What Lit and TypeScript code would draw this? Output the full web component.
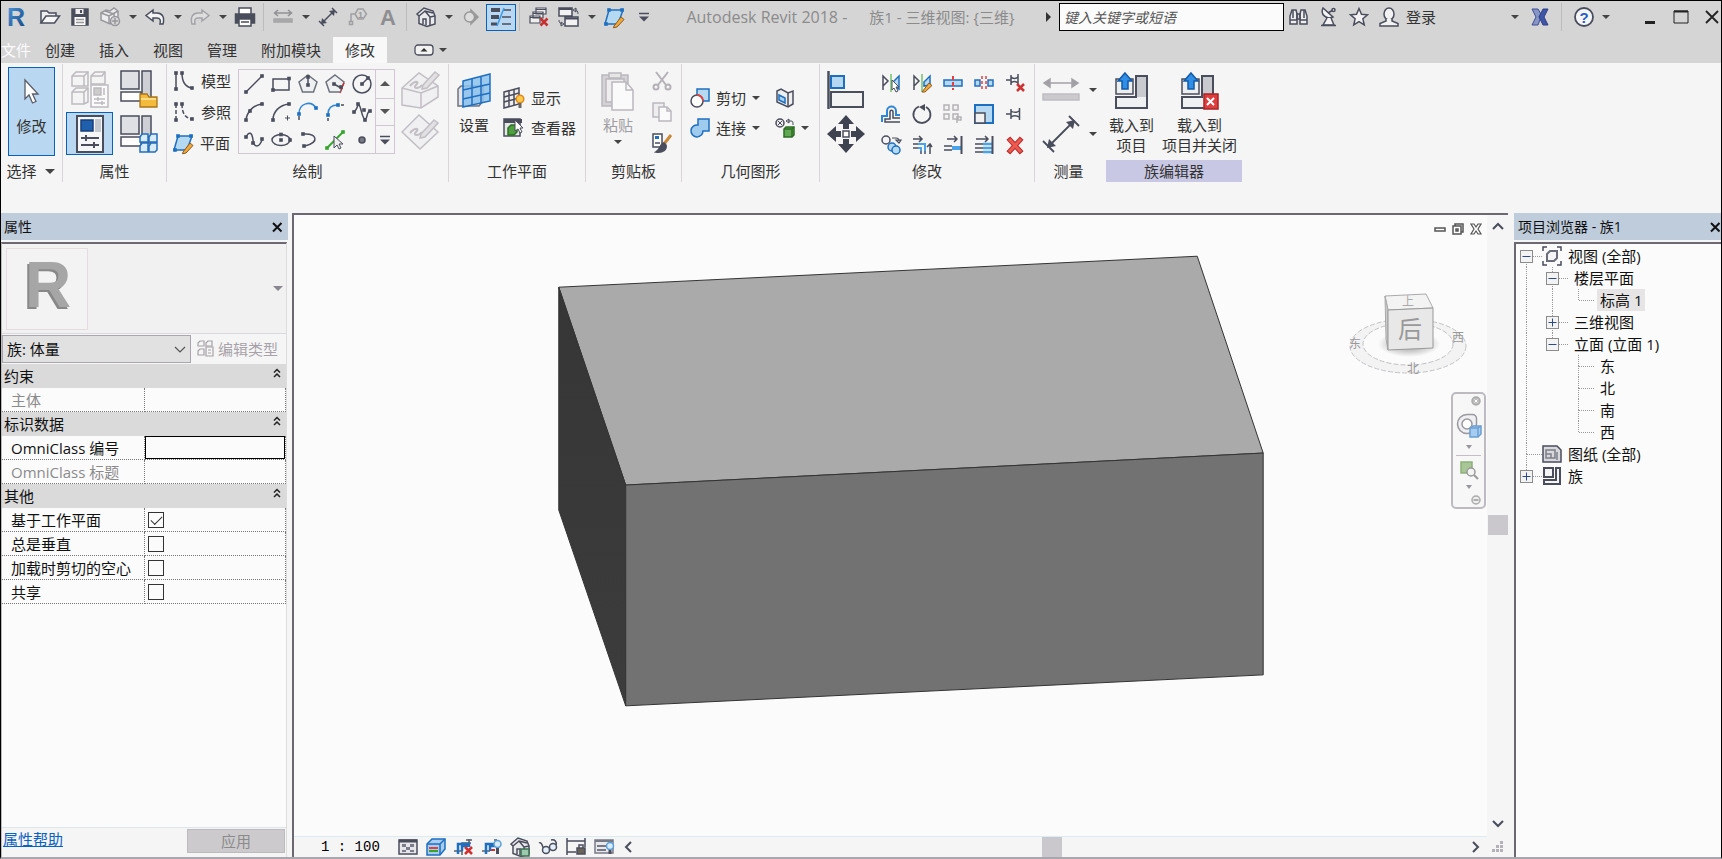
import { LitElement, html, svg, css, nothing, TemplateResult } from "lit";
import { customElement, property } from "lit/decorators.js";

type Art = { w: number; h: number; art: unknown };

const INK = "#4a4d5c";
const BLUE = "#1f6fc0";
const PALE = "#b5d9f3";

/** Small square grips drawn on sketch curves. */
const grips = (points: number[][], fill = INK) =>
  points.map(([x, y]) => svg`<rect x=${x - 1.8} y=${y - 1.8} width="3.6" height="3.6" fill=${fill} stroke="none"/>`);

const sheetPencil = svg`
  <path d="M5 3 19 3 14 17 1 17z" fill=${PALE} stroke=${BLUE}/>
  ${grips([[5, 3], [18, 3], [2, 17]], BLUE)}
  <path d="M10 19 17 10l3 2.5-7 7.5-3.500 .8z" fill="#f3a83c" stroke="#8a5a1c" stroke-width="1"/>`;

const familyBase = svg`
  <path d="M1 1h18v18H1z" fill="#dfe0e4"/><path d="M22 1h9v27H22z" fill="#cfd0d6"/>
  <path d="M1 22h20v9H1z" fill="#fdfdfd"/>`;

const house = svg`
  <path d="M1 7 8 1l9 3 2 5v8l-8 2.500-8-3V9z" fill="#e9eaec"/>
  <path d="M3 9l6-5 5 6v9M9 4l8 2M14 10l5-1M7 17v-5h3v6"/>`;

const icons: Record<string, Art> = {
  open: { w: 20, h: 16, art: svg`<path d="M1 14V2h6l2 2h7v3" fill="#eee"/><path d="M1 14 6 7h13.500l-5 7z" fill="#f6f6f6"/>` },
  save: { w: 18, h: 18, art: svg`<path d="M1 1h16v16H1z" fill="#4a4d5c"/><path d="M4.500 1h8v5h-8z" fill="#eee" stroke="none"/><path d="M3.500 9h11v8h-11z" fill="#fafafa" stroke="none"/><path d="M9 2h2v3H9z" fill="#4a4d5c" stroke="none"/><path d="M5 11.500h8M5 14.500h8" stroke="#999"/>` },
  sync: { w: 20, h: 20, art: svg`<g stroke="#98989c"><path d="M1 6l5-3 4 1 4-3 4 3v7l-8 6-9-4z" fill="#ececee"/><path d="M1 6l8 3 9-5M9 9v8M5 4l9 3v7"/><circle cx="15" cy="14" r="4.500" fill="#d8d8da"/><path d="M12 14h6M15 11v6"/></g>` },
  undo: { w: 20, h: 16, art: svg`<path d="M8 1 1 6.500 8 12V9h4c3 0 4 2 3 6h3c2-7-1-11-6-11H8z" fill="#f4f4f4"/>` },
  redo: { w: 20, h: 16, art: svg`<path d="M12 1l7 5.500L12 12V9H8c-3 0-4 2-3 6H2C0 8 3 4 8 4h4z" fill="#dedede" stroke="#a4a4a8"/>` },
  print: { w: 22, h: 20, art: svg`<path d="M5 7V1h12v6" fill="#fff"/><path d="M1.500 7h19v9h-19z" fill="#4a4d5c"/><path d="M5 12h12v7H5z" fill="#fff"/><path d="M7 15h8"/>` },
  measure: { w: 20, h: 16, art: svg`<path d="M1 4h18M5 1 1.500 4 5 7M15 1l3.500 3L15 7" stroke="#919195"/><path d="M1 10h18v3H1z" fill="#aaa" stroke="#a5a5a9"/>` },
  dimension: { w: 20, h: 20, art: svg`<path d="M3 17 17 3M1 14l5 5M14 1l5 5"/><path d="M3 17l1-6 5 5zM17 3l-1 6-5-5z" fill=${INK} stroke="none"/>` },
  tag: { w: 20, h: 18, art: svg`<g stroke="#a0a0a4"><path d="M10 1h5l3.500 5L15 11h-5L7 6zM7 6H3v8"/><path d="M1.500 13.500h3v3h-3z"/></g><text x="10" y="9.500" class="t9" fill="#999">1</text>` },
  text: { w: 20, h: 24, art: svg`<text x="2" y="20" class="t22" fill="#8e8e92">A</text>` },
  house: { w: 20, h: 20, art: house },
  section: { w: 18, h: 16, art: svg`<path d="M9 1l7 7-7 7z" fill="#999" stroke="#999"/><circle cx="7.500" cy="8" r="5" fill="#ddd" stroke="#999"/>` },
  thin: { w: 22, h: 20, art: svg`<path d="M1 3h9M1 10h8" stroke-width="4"/><path d="M1 17h6" stroke-width="3"/><path d="M13 3h8M12 10h9M12 17h9" stroke-width="1.500"/><path d="M14 1 7 19" stroke="#3b9be8"/>` },
  closeHidden: { w: 20, h: 20, art: svg`<path d="M7 1h10v6H7zM4 5h10v6H4zM1 9h10v7H1z" fill="#eee" stroke-width="1.200"/><path d="M7 2.500h10M4 6.500h10M1 10.500h10" stroke-width="1"/><path d="M11.500 11.500l7 7M18.500 11.500l-7 7" stroke="#c63030" stroke-width="2.500"/>` },
  switchWin: { w: 22, h: 20, art: svg`<path d="M1 1h13v8H1zM7 10h13v9H7z" fill="#f2f2f2"/><path d="M1 2h13M7 11.500h13" stroke-width="2"/><path d="M17 3c2 0 3 1 3 4M15 3l3-2v4zM4 17c-2 0-3-2-3-4M6 17l-3-2v4z" stroke-width="1"/>` },
  plane: { w: 21, h: 20, art: sheetPencil },
  customize: { w: 12, h: 10, art: svg`<path d="M1 1.500h10"/><path d="M1 4.500h10L6 9.500z" fill=${INK} stroke="none"/>` },
  binoculars: { w: 22, h: 20, art: svg`<path d="M4 3h4l1 4v10H2V9zM17 3h-4l-1 4v10h7V9z" fill="#eee"/><path d="M9 7h3v5H9zM2 13h7M12 13h7M5 3v8M16 3v8"/>` },
  dish: { w: 18, h: 20, art: svg`<path d="M3 1c-3 6 3 12 10 9z" fill="#f4f4f4"/><path d="M8 6l5-3"/><circle cx="13.500" cy="3" r="1.500" fill="#fff"/><path d="M7 11 3 18h11l-3-7" fill="#f4f4f4"/><path d="M1 18.500h15"/>` },
  star: { w: 20, h: 20, art: svg`<path d="M10 1.500l2.500 5.700 6 .6-4.600 4 1.400 6.200-5.300-3.300L4.700 18l1.400-6.200-4.600-4 6-.6z" fill="#f2f2f2"/>` },
  user: { w: 20, h: 20, art: svg`<ellipse cx="10" cy="7" rx="5" ry="6" fill="#f2f2f2"/><path d="M7 12v2l-6 2.500V19h18v-2.500L13 14v-2" fill="#f2f2f2"/>` },
  exchange: { w: 18, h: 18, art: svg`<path d="M1 1h6l3 5-2 3 2 0-3 8H1l4-8z" fill="#8795c4" stroke="#3e4f96" stroke-width="1"/><path d="M17 1h-5L8 9l4 8h5l-4-8z" fill="#3e56a8" stroke="#2f3f86" stroke-width="1"/>` },
  help: { w: 20, h: 20, art: svg`<circle cx="10" cy="10" r="9" fill="#f5f6fa" stroke-width="1.800"/><text x="5.500" y="15.500" class="t15" fill="#2b5cc0">?</text>` },
  min: { w: 18, h: 16, art: svg`<path d="M4 13.500h10" stroke="#222" stroke-width="3"/>` },
  max: { w: 18, h: 16, art: svg`<path d="M2 2h14v12H2z" stroke="#222" stroke-width="1"/><path d="M2 2.500h14" stroke="#222" stroke-width="2"/>` },
  close: { w: 18, h: 16, art: svg`<path d="M3 2l12 12M15 2 3 14" stroke="#222" stroke-width="1.800"/>` },
  closePane: { w: 12, h: 12, art: svg`<path d="M2 2l8.500 8.500M10.500 2 2 10.500" stroke="#111" stroke-width="2"/>` },
  minRibbon: { w: 20, h: 12, art: svg`<rect x="1" y="1" width="18" height="10" rx="3" fill="#f2f2f2" stroke-width="1.300"/><path d="M6.500 7.500h7L10 4z" fill="#333" stroke="none"/>` },

  cursor: { w: 18, h: 26, art: svg`<path d="M2 1v19l4-4 3.500 8 3.500-1.500L9.500 15H15z" fill="#fff" stroke="#5a5d68" stroke-width="1.300"/>` },
  typeProps: { w: 38, h: 38, art: svg`<g stroke="#bdbabf"><path d="M1 6l4-4h12v14H1zM20 6l4-4h10v12H20zM1 22l4-4h12v14l-4 2H1z" fill="#f4f4f5"/><path d="M1 6h12v10M13 6l4-4M20 6h11l3-4M1 22h12v12M13 22l4-4"/><path d="M20 15h17v22H20z" fill="#fbfbfb"/><path d="M23 18h7v7h-7z" fill="#ccc"/><path d="M33 18v7M23 29h11M23 33h11M27 27v4M31 31v4"/></g>` },
  famCategory: { w: 38, h: 38, art: svg`${familyBase}<path d="M20 27v10h17V27H29l-2-3h-7z" fill="#f3ba3c" stroke="#a9761a" stroke-width="1.300"/><path d="M21 29h15" stroke="#ffe7a3"/>` },
  properties: { w: 28, h: 38, art: svg`<path d="M1 1h26v36H1z" fill="#f4f6f8" stroke-width="2"/><path d="M5 5h12v11H5z" fill="#1f5fae" stroke="#173f77"/><path d="M19 4h6v13h-6z" fill="#c7c9d0" stroke="none"/><path d="M5 23h18M5 30h18M10 20v6M18 27v6" stroke-width="2"/>` },
  famTypes: { w: 38, h: 38, art: svg`${familyBase}<g stroke="#256fbb" fill="#d9ebf8"><path d="M20 22l2-3h6v8h-8zM29 22l2-3h6v8h-8zM20 31l2-3h6v9h-8zM29 31l2-3h6v7l-2 2h-6z"/></g>` },
  model: { w: 22, h: 20, art: svg`<path d="M3 2v16M9 2c0 9 3 14 10 15"/>${grips([[3, 2], [3, 18], [9, 2], [19, 17]])}` },
  reference: { w: 22, h: 20, art: svg`<g stroke-dasharray="4 2"><path d="M3 2v16M9 2c0 9 3 14 10 15"/></g>${grips([[3, 2], [3, 18], [9, 2], [19, 17]])}` },
  line: { w: 20, h: 20, art: svg`<path d="M2 18 18 2"/>${grips([[2, 18], [18, 2]])}` },
  rect: { w: 20, h: 20, art: svg`<path d="M2 5h16v11H2z"/>${grips([[18, 4.5], [2, 16]])}` },
  polyIn: { w: 20, h: 20, art: svg`<path d="M10 1l9 7-3.500 10h-11L1 8z" fill="#eef0f1" stroke="#6d717c"/><path d="M10 3v8"/>${grips([[10, 3], [10, 11]])}` },
  polyOut: { w: 20, h: 20, art: svg`<path d="M10 1l9 7-3.500 10h-11L1 8z" fill="#eef0f1" stroke="#6d717c"/><path d="M9 10l7 4"/><path d="M19 9l-4 10" stroke="#e22828" stroke-dasharray="3 2"/>${grips([[9, 10], [16, 13]])}` },
  circle: { w: 20, h: 20, art: svg`<circle cx="10" cy="10" r="9"/><path d="M10 10l6-6"/>${grips([[10, 10], [16, 4]])}` },
  arc3: { w: 20, h: 20, art: svg`<path d="M2 18C3 10 9 3 18 2"/>${grips([[2, 18], [6, 9], [18, 2]])}` },
  arcCenter: { w: 20, h: 20, art: svg`<path d="M2 18C2 10 8 3 18 2"/><path d="M14 16h5M16.500 13.500v5" stroke-width="1"/>${grips([[2, 18], [18, 2]])}` },
  arcTangent: { w: 20, h: 20, art: svg`<path d="M1 12C1 1 13-2 18 6" stroke="#2f86d6"/>${grips([[1, 12], [18, 6]], BLUE)}<path d="M1 14v4"/>` },
  fillet: { w: 20, h: 20, art: svg`<path d="M3 12C3 6 6 3 13 3" stroke="#2f86d6"/>${grips([[3, 13], [13, 3]], BLUE)}<path d="M3 16v3M16 3h3"/>` },
  spline: { w: 20, h: 20, art: svg`<path d="M2 10c4-3 3-8 5-7s3 14 6 14 1-7 5-8"/>${grips([[2, 10], [6, 2], [12, 8], [18, 9], [13, 18]])}` },
  splineCurve: { w: 20, h: 20, art: svg`<path d="M2 7c3-6 6-5 7 3s6 8 9 0"/>${grips([[2, 7], [9, 13], [18, 9]])}` },
  ellipse: { w: 20, h: 20, art: svg`<ellipse cx="10" cy="10" rx="9" ry="5.500"/>${grips([[10, 10], [10, 4.5], [19, 10]])}` },
  partial: { w: 20, h: 20, art: svg`<path d="M5 4c14-1 17 8 2 12"/>${grips([[5, 4], [6, 16]])}` },
  pick: { w: 20, h: 20, art: svg`<path d="M2 18 18 2" stroke="#36a52c" stroke-width="2"/>${grips([[2, 18], [18, 2]], "#36a52c")}<path d="M9 6v12l3-3 2 4 2-1-2-4h4z" fill="#eee" stroke-width="1"/>` },
  point: { w: 20, h: 20, art: svg`<circle cx="10" cy="10" r="3" fill="#777985"/>` },
  drawFace: { w: 38, h: 38, art: svg`<g stroke="#c2bfc4"><path d="M1 17 18 2l19 13v11L20 37 1 34z" fill="#f0eff1"/><path d="M1 17l19 5 17-7M20 22v15"/><path d="M9 15c5-6 10-5 6-1s3 4 6 0" stroke-width="2"/><path d="M22 14 34 1l4 3-12 13-5 1z" fill="#e2e0e3"/></g>` },
  drawPlane: { w: 38, h: 38, art: svg`<g stroke="#c2bfc4"><path d="M1 19 18 2l19 17-18 17z" fill="#f0eff1"/><path d="M9 20c5-6 10-5 6-1s3 4 6 0" stroke-width="2"/><path d="M20 21 33 7l4 3-13 14-5 1z" fill="#e2e0e3"/></g>` },
  setPlane: { w: 34, h: 36, art: svg`<path d="M1 16l3-3h22v15l-4 5H1z" fill="#e3e4e8" stroke="#70737e"/><path d="M6 8 33 1v27L6 34z" fill="#8cc1ec" fill-opacity=".85" stroke="#1f6fc0"/><path d="M15 6v26M24 3v27M6 17l27-6M6 26l27-6" stroke="#1f6fc0"/>` },
  showPlane: { w: 22, h: 22, art: svg`<path d="M1 5l15-4v16L1 21z" fill="#eee"/><path d="M6 4v16M11 2v16M1 10l15-4M1 15l15-4"/><circle cx="17" cy="12" r="3.800" fill="#ffc94a" stroke="#e08a1e"/><path d="M17 16v5" stroke-width="3" stroke="#666"/>` },
  viewer: { w: 22, h: 22, art: svg`<path d="M1 2h16v17H1z" fill="#e6e8e6"/><path d="M1 4h18" stroke-width="4"/><path d="M5 11l3-3h6v7l-3 3H5z" fill="#4d9f40" stroke="#2d6e24"/><path d="M12 3v11l3-2 2 4 2-1-2-4h3z" fill="#fff" stroke-width="1"/>` },
  paste: { w: 34, h: 40, art: svg`<g stroke="#bbb8bd"><path d="M1 4h26v31H1z" fill="#d4d2d5"/><path d="M5 8h18v23H5z" fill="#eee"/><path d="M8 2h12v5H8z" fill="#e6e6e6"/><path d="M11 11h14l7 8v20H11z" fill="#fafafa"/><path d="M25 11v8h7"/></g>` },
  cut: { w: 20, h: 20, art: svg`<g stroke="#b5b2b7" stroke-width="2"><path d="M4 1l10 13M16 1 6 14"/><circle cx="4" cy="16" r="2.500"/><circle cx="16" cy="16" r="2.500"/></g>` },
  copy: { w: 20, h: 20, art: svg`<g stroke="#bbb8bd"><path d="M1 1h11v14H1z" fill="#eee"/><path d="M7 5h8l4 4v10H7z" fill="#fafafa"/><path d="M15 5v4h4"/></g>` },
  match: { w: 20, h: 20, art: svg`<path d="M1 1h9v13H1z" fill="#fff"/><path d="M3 3h4v3H3z" fill=${BLUE} stroke="none"/><path d="M3 10h5"/><path d="M19 2l-7 9" stroke="#c98a3a" stroke-width="3"/><path d="M12 10c-4 0-3 6-8 9 7 1 11-2 10-7z" fill="#4a4d5c"/>` },
  cutGeo: { w: 20, h: 20, art: svg`<path d="M7 1h12v12H7z" fill=${PALE} stroke=${BLUE}/><circle cx="7" cy="13" r="6" fill="#fff"/><path d="M7 7a6 6 0 0 1 6 6" stroke="#e04040" stroke-width="1.800"/>` },
  joinGeo: { w: 20, h: 20, art: svg`<path d="M8 1h11v12h-6a6 6 0 1 1-5-6z" fill="#9fcbee" stroke=${BLUE}/>` },
  splitFace: { w: 20, h: 20, art: svg`<path d="M2 3l4-2 7 4 5-2v13l-5 3-11-5z" fill="#eceef0"/><path d="M13 5v14"/><path d="M4 7l6 3v5l-6-3z" fill="#a8d2f1" stroke=${BLUE}/>` },
  paint: { w: 20, h: 20, art: svg`<circle cx="5" cy="5" r="4" fill="#eee"/><path d="M3 3l4 4M7 3 3 7" stroke-width="1"/><path d="M13 3h3c2 0 2 1 2 4M14 1l-3 2 3 2z" stroke-width="1"/><path d="M9 11l2-2h8v8l-2 2H9z" fill="#62a852" stroke="#2d6e24"/><path d="M9 11h8v8M17 11l2-2" stroke="#2d6e24"/>` },
  align: { w: 38, h: 38, art: svg`<path d="M1.500 0v38" stroke-width="2.500"/><path d="M4 5h13v12H4z" fill=${PALE} stroke=${BLUE} stroke-width="2"/><path d="M4 21h32v15H4z" fill="#f2f2f3" stroke-width="2"/>` },
  move: { w: 38, h: 38, art: svg`<g fill="#3f4250" stroke="none"><path d="M19 0l8 9h-5v5h-6V9h-5zM19 38l-8-9h5v-5h6v5h5zM0 19l9-8v5h5v6H9v5zM38 19l-9 8v-5h-5v-6h5v-5z"/></g><path d="M16 16h6v6h-6z" fill="#fff"/>` },
  mirrorPick: { w: 20, h: 20, art: svg`<path d="M2 17V3l5 5-5 5"/><path d="M10 1v18" stroke="#36a52c" stroke-width="1"/><path d="M18 16V3l-6 6v3z" fill=${PALE} stroke=${BLUE}/><path d="M11 7v10l2-2 2 4 2-1-2-4h3z" fill="#fff" stroke-width="1"/>` },
  mirrorDraw: { w: 20, h: 20, art: svg`<path d="M2 17V3l5 5-5 5"/><path d="M10 1v18" stroke="#36a52c" stroke-width="1"/><path d="M18 12V3l-6 6v4z" fill=${PALE} stroke=${BLUE}/><path d="M10 19l7-9 3 2.500-7 6.500z" fill="#f3a83c" stroke="#8a5a1c" stroke-width="1"/>` },
  split: { w: 20, h: 20, art: svg`<path d="M1 7h18v6H1z" fill=${PALE} stroke=${BLUE}/><path d="M10 3v14" stroke="#e04040" stroke-width="2" stroke-dasharray="4 2"/>` },
  splitGap: { w: 20, h: 20, art: svg`<path d="M1 7h5v6H1zM14 7h5v6h-5z" fill=${PALE} stroke=${BLUE}/><path d="M8 3v14M12 3v14" stroke="#e04040" stroke-width="1.500" stroke-dasharray="3 2"/>` },
  unpin: { w: 20, h: 20, art: svg`<path d="M1 7h5M6 2v10M6 4c2 2 4 2 7 0M6 10c2-2 4-2 7 0M13 1v12"/><path d="M12 11l7 7M19 11l-7 7" stroke="#cc3333" stroke-width="2.500"/>` },
  offset: { w: 20, h: 20, art: svg`<path d="M1 18v-6h5V7c0-6 9-6 9 0v4h4" stroke="#2f86d6" stroke-width="2"/><path d="M19 14h-7V8c0-2.500-3-2.500-3 0v7H4v3h15"/>` },
  rotate: { w: 20, h: 20, art: svg`<path d="M7 2.500A8.500 8.500 0 1 0 14 3" stroke-width="1.800"/><path d="M13 0v7L7 3z" fill=${INK} stroke="none"/>` },
  array: { w: 20, h: 20, art: svg`<g stroke="#b5b2b7" fill="#f3f3f3"><path d="M1 1h5v5H1zM10 1h5v5h-5zM1 10h5v5H1zM10 10h5v5h-5z"/></g><path d="M14 12v7M14 13h4v3h-4" stroke="#b5b2b7"/>` },
  scale: { w: 20, h: 20, art: svg`<path d="M1 1h18v18H1z" fill=${PALE} stroke=${BLUE} stroke-width="2"/><path d="M1 9h10v10H1z" fill="#f1f1f2"/>` },
  pin: { w: 20, h: 20, art: svg`<path d="M1 10h5M6 5v10M6 7c3 2 5 2 8 0M6 13c3-2 5-2 8 0M14.500 4v12"/>` },
  copyTool: { w: 20, h: 20, art: svg`<circle cx="5" cy="5" r="4"/><path d="M11 3h4c2 0 3 1 3 3M18 8l-3-3h5z" stroke-width="1.200"/><circle cx="11" cy="12" r="4" fill=${PALE} stroke=${BLUE}/><circle cx="15" cy="15" r="4" fill=${PALE} stroke=${BLUE}/>` },
  trimCorner: { w: 20, h: 20, art: svg`<path d="M1 4h9M7 1l3 3-3 3M18 19V9M15 12l3-3 2 3M1 9h5M1 13h5M9 19v-3M13 19v-3"/><path d="M6 9h7v7M6 13h3v3" stroke="#4aa3e8" stroke-width="2"/>` },
  trimOne: { w: 20, h: 20, art: svg`<path d="M4 4h10M11 1l3 3-3 3M1 11h8M1 15h8"/><path d="M9 13h9" stroke="#4aa3e8" stroke-width="4"/><path d="M18.500 1v18" stroke-width="2"/>` },
  trimMany: { w: 20, h: 20, art: svg`<path d="M2 4h12M11 1l3 3-3 3M1 9h8M1 13h8M1 17h8"/><path d="M9 9h9M9 13h9M9 17h9" stroke="#4aa3e8" stroke-width="2.500"/><path d="M18.500 1v18" stroke-width="2"/>` },
  remove: { w: 20, h: 20, art: svg`<path d="M5 5l10 11M15 5 5 16" stroke="#b52a2a" stroke-width="5" stroke-linecap="square"/><path d="M5 5l10 11M15 5 5 16" stroke="#ee5a50" stroke-width="3" stroke-linecap="square"/>` },
  measureBig: { w: 38, h: 26, art: svg`<g stroke="#a3a1a5"><path d="M2 6h34"/><path d="M8 2 2 6l6 4zM30 2l6 4-6 4z" fill="#a3a1a5"/><path d="M1 17h36v6H1z" fill="#cbc9cc" stroke="#c0bdc2"/></g>` },
  dimensionBig: { w: 38, h: 38, art: svg`<path d="M6 32 32 6M1 26l11 11M27 1l10 10" stroke-width="1.800"/><path d="M5 33l2-9 7 7zM33 5l-2 9-7-7z" fill=${INK} stroke="none"/>` },
  load: { w: 34, h: 38, art: svg`<path d="M1 7h17v15H1z" fill="#eceef0"/><path d="M21 4h11v32H1V25h20z" fill="#eff0f1" stroke-width="2"/><path d="M22 5h9v20h-9z" fill="#c9cad0" stroke="none"/><path d="M10 1l7 8h-4v8H7V9H3z" fill="#2f8fe8" stroke="#1459a5"/>` },
  loadClose: { w: 38, h: 38, art: svg`<path d="M1 7h17v15H1z" fill="#eceef0"/><path d="M21 4h11v32H1V25h20z" fill="#eff0f1" stroke-width="2"/><path d="M22 5h9v20h-9z" fill="#c9cad0" stroke="none"/><path d="M10 1l7 8h-4v8H7V9H3z" fill="#2f8fe8" stroke="#1459a5"/><path d="M23 22h14v15H23z" fill="#dd3f3f" stroke="#a92424"/><path d="M26 26l7 7M33 26l-7 7" stroke="#fff" stroke-width="2"/>` },

  editType: { w: 18, h: 18, art: svg`<g stroke="#a7a2a9" stroke-width="1.200"><path d="M1 3l2-2h4v5H1zM9 3l2-2h4v5H9zM1 11l2-2h4v6H1z"/><path d="M9 7h7v9H9zM11 10h3M11 13h3"/></g>` },
  collapse: { w: 8, h: 10, art: svg`<path d="M1 4.500 4 1.500l3 3M1 9l3-3 3 3" stroke="#222"/>` },
  chevDown: { w: 12, h: 8, art: svg`<path d="M1 1l5 5 5-5" stroke="#555" stroke-width="1.200"/>` },
  views: { w: 20, h: 20, art: svg`<path d="M1 5V1h4M15 1h4v4M19 15v4h-4M5 19H1v-4" stroke-width="1.500"/><path d="M5 8l3-3h7v7l-3 3H5z" fill="#f5f5f5" stroke="#6b6e7a" stroke-width="2"/>` },
  sheets: { w: 20, h: 18, art: svg`<path d="M1 1h14l4 4v12H1z" fill="#d9d9dd"/><path d="M4 5h9v8H4zM4 9h5v4M15 7v8" stroke="#7c7f8a"/>` },
  families: { w: 20, h: 20, art: svg`<path d="M2 2h9v9H2z" fill="#f5f5f5" stroke-width="2"/><path d="M14 2h4v16H2v-4h12z" fill="#f5f5f5" stroke-width="2"/>` },

  winMin: { w: 12, h: 12, art: svg`<path d="M1 5h10v3H1z" fill="#fff" stroke="#555"/>` },
  winRestore: { w: 12, h: 12, art: svg`<path d="M3 3V1h8v8H9" stroke="#555"/><path d="M1 3h8v8H1z" fill="#fff" stroke="#555"/><path d="M4 6h2v2H4z" stroke="#555"/>` },
  winClose: { w: 12, h: 12, art: svg`<path d="M1 1h3l2 3 2-3h3L8 6l3 5H8L6 8l-2 3H1l3-5z" fill="#fff" stroke="#555" stroke-width="1.200"/>` },
  up: { w: 12, h: 8, art: svg`<path d="M1 7l5-5 5 5" stroke-width="2"/>` },
  down: { w: 12, h: 8, art: svg`<path d="M1 1l5 5 5-5" stroke-width="2"/>` },
  left: { w: 8, h: 12, art: svg`<path d="M7 1 2 6l5 5" stroke-width="2"/>` },
  right: { w: 8, h: 12, art: svg`<path d="M1 1l5 5-5 5" stroke-width="2"/>` },
  detail: { w: 20, h: 18, art: svg`<path d="M1 2h18v14H1z" fill="#e6e6ea"/><path d="M1 3h18" stroke-width="3"/><path d="M4 6h4v3H4zM12 6h4v3h-4zM8 9h4v3H8zM4 12h4v2H4zM12 12h4v2h-4z" fill="#7a7d89" stroke="none"/>` },
  style: { w: 20, h: 18, art: svg`<path d="M1 6l5-5h13v10l-5 6H1z" fill="#a8cdf0" stroke=${BLUE}/><path d="M1 6h13v11M14 6l5-5" stroke=${BLUE}/><path d="M3 10h9" stroke="#e04040" stroke-width="2"/><path d="M3 13h9" stroke="#36a52c" stroke-width="2"/>` },
  cropOff: { w: 20, h: 18, art: svg`<path d="M0 13h8M8 17V5h9M12 2h6M15 1v6" stroke="#5a5d68"/><path d="M4 16V6h11v3M8 13V8h6" stroke=${BLUE} stroke-width="2.500"/><path d="M11 9l7 7M18 9l-7 7" stroke="#d03030" stroke-width="2.500"/>` },
  cropShow: { w: 20, h: 18, art: svg`<path d="M0 13h8M12 2h3" stroke="#5a5d68"/><path d="M4 16V6h9M8 13V8h5" stroke=${BLUE} stroke-width="2.500"/><path d="M9 12h4" stroke="#d03030" stroke-width="2"/><circle cx="15.500" cy="6" r="3.500" fill="#d8ebfb" stroke="#5a9fd8"/><path d="M15.500 10v6" stroke-width="3"/>` },
  lock3d: { w: 20, h: 20, art: svg`${house}<path d="M11 12h8v7h-8z" fill="#9bc9ae" stroke="#3c6e52"/>` },
  glasses: { w: 20, h: 18, art: svg`<path d="M1 5c3-2 4 6 5 6M13 2c4-1 6 2 5 5"/><circle cx="8" cy="12" r="3.500" fill="#e3f0fb"/><circle cx="15" cy="9" r="3.500" fill="#e3f0fb"/>` },
  constraints: { w: 20, h: 18, art: svg`<path d="M1 0v17M19 0v9M1 3h18M1 14h9"/><path d="M11 10h8v6h-8z" fill="#6a6358"/><path d="M13 10V7h4v3"/>` },
  analysis: { w: 20, h: 18, art: svg`<path d="M1 2h18v13H1z" fill="#e8e8ec" stroke="#777a86"/><path d="M1 3h18M3 8h9M3 12h9" stroke="#777a86" stroke-width="2"/><circle cx="16" cy="8" r="3.500" fill="#d8ebfb" stroke="#5a9fd8"/><path d="M16 12v4" stroke-width="3"/>` },
  grip: { w: 12, h: 12, art: svg`<g fill="#b5b1b8" stroke="none"><path d="M8 0h3v3H8zM4 4h3v3H4zM8 4h3v3H8zM0 8h3v3H0zM4 8h3v3H4zM8 8h3v3H8z"/></g>` },
  navClose: { w: 10, h: 10, art: svg`<circle cx="5" cy="5" r="4" fill="#bbb" stroke="#aaa"/><path d="M3.500 3.500l3 3M6.500 3.500l-3 3" stroke="#fff" stroke-width="1"/>` },
  navMenu: { w: 10, h: 10, art: svg`<circle cx="5" cy="5" r="4" fill="#eee" stroke="#aaa"/><path d="M2.500 5h5" stroke="#999"/>` },
  wheel: { w: 26, h: 26, art: svg`<g stroke="#9b989f"><path d="M11 1.500h5a4 4 0 0 1 4.500 4V11a9.500 9.500 0 1 1-9.500-9.500z" fill="#f0f0f2"/><circle cx="11" cy="11" r="5" fill="#fff"/></g><path d="M14 15l3-2h8v8l-3 3h-8z" fill="#a5cdf2" stroke="#6b9fd2"/><path d="M14 15h8v9M22 15l3-2" stroke="#6b9fd2"/>` },
  zoomRegion: { w: 18, h: 18, art: svg`<path d="M1 1h11v11H1z" fill="#a9c796" stroke="#8db07a"/><circle cx="11" cy="11" r="4" fill="#f4f4f4" stroke="#999"/><path d="M14 14l4 4" stroke="#999" stroke-width="2"/>` },
};

const iconStyles = css`
  svg { display: block; flex: none; overflow: visible; fill: none; stroke: #4a4d5c; stroke-width: 1.5; }
  svg text { stroke: none; font-family: "Liberation Sans", sans-serif; font-weight: 700; }
  .t9 { font-size: 9px; }
  .t15 { font-size: 15px; }
  .t22 { font-size: 22px; }
`;

const icon = (name: string) => {
  const i = icons[name];
  return html`<svg width=${i.w} height=${i.h} viewBox="0 0 ${i.w} ${i.h}" aria-hidden="true">${i.art}</svg>`;
};

const base = css`
  :host, * { box-sizing: border-box; }
  button { font: inherit; color: inherit; border: 0; background: none; padding: 0; margin: 0; display: flex; align-items: center; justify-content: center; white-space: nowrap; }
  .arrow { flex: none; display: flex; align-items: center; justify-content: center; width: 14px; height: 14px; }
  .arrow::before { content: ""; border: 4px solid transparent; border-top: 4px solid #444; border-bottom: 0; }
  .dim { color: #a09da2; }
`;

const drop = (label: string) => html`<button class="arrow" aria-label=${label}></button>`;

@customElement("title-bar")
class TitleBar extends LitElement {
  static styles = [base, iconStyles, css`
    :host { display: flex; flex: none; height: 36px; padding-bottom: 4px; background: #d5d5d5; align-items: center; }
    .quick, .right, .win { display: flex; align-items: center; flex: none; }
    .tool { width: 30px; height: 27px; }
    .brand { width: 34px; height: 32px; padding-right: 4px; }
    .quick .arrow { width: 15px; }
    .on { background: #b9d7f0; border: 1px solid #0a62b8; }
    .sep { width: 1px; height: 28px; margin: 0 4px 0 3px; background: #bcbcbc; }
    .right .sep { margin: 0 7px 0 6px; }
    .title { flex: 1; display: flex; justify-content: center; gap: 22px; font-size: 15px; line-height: 24px; color: #8b8b8b; white-space: nowrap; overflow: hidden; }
    .title b { font-weight: 400; font-size: 16px; }
    .expand { width: 14px; height: 14px; }
    .expand::before { content: ""; border: 5px solid transparent; border-left: 5px solid #333; border-right: 0; }
    input { width: 225px; height: 28px; margin: 0 0 0 3px; padding: 0 4px; border: 1px solid #000; background: #fbfbfb; font: italic 14px/20px "Open Sans", "Noto Sans CJK SC", sans-serif; color: #555; }
    input::placeholder { color: #555; opacity: 1; }
    .login { font-size: 15px; line-height: 22px; padding: 0 72px 0 2px; color: #333; }
    .right .after { margin-right: 3px; }
    .win { gap: 13px; padding: 0 0 0 28px; }
    .logo { font-size: 25px; }
  `];
  private items: [string, string][] = [
    ["open", "打开"], ["save", "保存"], ["sync", "同步"], ["v", ""], ["undo", "放弃"], ["v", ""], ["redo", "重做"], ["v", ""],
    ["print", "打印"], ["|", ""], ["measure", "测量"], ["v", ""], ["dimension", "对齐尺寸标注"], ["tag", "按类别标记"], ["text", "文字"],
    ["|", ""], ["house", "默认三维视图"], ["v", ""], ["section", "剖面"], ["thin", "细线"], ["|", ""],
    ["closeHidden", "关闭隐藏窗口"], ["switchWin", "切换窗口"], ["v", ""], ["plane", "工作平面"], ["customize", "自定义"],
  ];
  render() {
    return html`
      <div class="quick">
        <button class="tool brand" aria-label="Revit">
          <svg width="22" height="30" viewBox="0 0 22 30">
            <defs><linearGradient id="g" x1="0" y1="0" x2="1" y2="1"><stop offset="0" stop-color="#4f9be0"/><stop offset="1" stop-color="#15457f"/></linearGradient></defs>
            <text class="logo" x="2" y="24" fill="url(#g)">R</text>
          </svg>
        </button>
        ${this.items.map(([k, l]) => k === "v" ? drop("更多") : k === "|" ? html`<span class="sep"></span>`
          : html`<button class="tool ${k === "thin" ? "on" : ""}" aria-label=${l}>${icon(k)}</button>`)}
      </div>
      <div class="title"><b>Autodesk Revit 2018 -</b><span>族1 - 三维视图: {三维}</span></div>
      <div class="right">
        <button class="expand" aria-label="展开"></button>
        <input type="search" aria-label="搜索" placeholder="键入关键字或短语">
        <button class="tool" aria-label="搜索">${icon("binoculars")}</button>
        <button class="tool" aria-label="通讯中心">${icon("dish")}</button>
        <button class="tool" aria-label="收藏夹">${icon("star")}</button>
        <button class="tool" aria-label="用户">${icon("user")}</button>
        <button class="login">登录</button>
        <button class="arrow after" aria-label="登录选项"></button>
        <button class="tool" aria-label="Exchange">${icon("exchange")}</button>
        <span class="sep"></span>
        <button class="tool" aria-label="帮助">${icon("help")}</button>
        ${drop("帮助选项")}
        <div class="win">
          <button aria-label="最小化">${icon("min")}</button>
          <button aria-label="最大化">${icon("max")}</button>
          <button aria-label="关闭">${icon("close")}</button>
        </div>
      </div>`;
  }
}

@customElement("ribbon-tabs")
class RibbonTabs extends LitElement {
  static styles = [base, iconStyles, css`
    :host { display: flex; flex: none; height: 26px; background: #d5d5d5; align-items: center; font-size: 15px; line-height: 24px; color: #333; }
    .tab { height: 26px; padding: 0 12px; }
    .file { padding: 0 2px 0 0; color: #fbfbfb; }
    .active { background: #f8f8f8; }
    .toggle { margin: 0 2px 0 27px; }
  `];
  render() {
    return html`
      <button class="tab file">文件</button>
      ${["创建", "插入", "视图", "管理", "附加模块", "修改"].map((t) => html`<button class="tab ${t === "修改" ? "active" : ""}">${t}</button>`)}
      <button class="toggle" aria-label="最小化功能区">${icon("minRibbon")}</button>${drop("功能区选项")}`;
  }
}

@customElement("ribbon-bar")
class RibbonBar extends LitElement {
  static styles = [base, iconStyles, css`
    :host { display: flex; flex: none; height: 150px; padding-top: 1px; background: #f5f5f5; font-size: 15px; line-height: 20px; color: #333; white-space: nowrap; align-items: flex-start; }
    .panel { flex: none; border-right: 1px solid #d9d5d9; height: 118px; }
    .panel.open { border: 0; }
    .body { display: flex; height: 94px; padding: 3px 7px 0; align-items: flex-start; }
    .label { margin: 2px 0 0; height: 22px; line-height: 22px; display: flex; justify-content: center; align-items: center; gap: 6px; font-size: 15px; font-weight: 400; }
    .label .arrow::before { border-width: 5px 5px 0; }
    .family { background: #c9c8e4; }
    .big { flex-direction: column; justify-content: flex-start; }
    .big .pic { height: 48px; display: flex; align-items: center; }
    .on { background: #b9d7f0; border: 1px solid #0a62b8; }
    .modify { width: 47px; height: 89px; }
    .duo { display: grid; grid-template: 43px 43px / 47px 47px; gap: 2px; }
    .props { padding: 3px 4px 0 3px; }
    .draw { padding: 3px 9px 0 6px; }
    .list { display: flex; flex-direction: column; gap: 11px; }
    .list button { gap: 6px; justify-content: flex-start; height: 20px; }
    .draw .list { padding-top: 4px; }
    .gallery { display: flex; margin: 2px 6px 0 7px; border: 1px solid #cfc8d0; height: 85px; }
    .cells { display: grid; grid-template: repeat(3, 28px) / repeat(5, 27px); padding-left: 1px; }
    .scroll { display: grid; grid-template-rows: 1fr 1fr 1fr; width: 19px; border-left: 1px solid #cfc8d0; }
    .scroll button + button { border-top: 1px solid #cfc8d0; }
    .tri::before { content: ""; border: 5px solid transparent; border-top: 5px solid #555; border-bottom: 0; }
    .tri.flip::before { border-top: 0; border-bottom: 5px solid #555; }
    .faces { display: flex; flex-direction: column; gap: 4px; padding-top: 4px; }
    .plane { padding: 3px 9px 0 8px; gap: 12px; }
    .plane .list, .geo .list { padding-top: 21px; gap: 10px; }
    .clip { padding: 3px 9px 0 15px; gap: 17px; }
    .clip .list { padding-top: 4px; }
    .geo { padding: 3px 4px 0 8px; gap: 9px; }
    .geo .list div { display: flex; align-items: center; height: 20px; gap: 6px; }
    .mod { padding: 3px 4px 0 7px; gap: 10px; }
    .tools { display: grid; grid-template: repeat(3, 31px) / repeat(5, 31px); }
    .pair { display: flex; flex-direction: column; gap: 6px; padding-top: 4px; }
    .meas { padding: 3px 2px 0 7px; gap: 6px; }
    .meas .pair > div { display: flex; align-items: center; gap: 6px; height: 38px; }
    .load { padding: 3px 5px 0 3px; gap: 8px; }
    .last { margin-left: 4px; }
  `];
  private gallery = ["line", "rect", "polyIn", "polyOut", "circle", "arc3", "arcCenter", "arcTangent", "fillet", "spline", "splineCurve", "ellipse", "partial", "pick", "point"];
  private tools = ["mirrorPick", "mirrorDraw", "split", "splitGap", "unpin", "offset", "rotate", "array", "scale", "pin", "copyTool", "trimCorner", "trimOne", "trimMany", "remove"];
  private panel(label: string, cls: string, body: TemplateResult, extra = "") {
    return html`<section class="panel ${extra}"><div class="body ${cls}">${body}</div>
      <h2 class="label ${cls === "load" ? "family" : ""}">${label}${label === "选择" ? drop("选择") : nothing}</h2></section>`;
  }
  render() {
    return html`
      ${this.panel("选择", "", html`<button class="big modify on"><span class="pic">${icon("cursor")}</span>修改</button>`)}
      ${this.panel("属性", "props", html`<div class="duo">
        <button aria-label="类型属性">${icon("typeProps")}</button><button aria-label="族类别">${icon("famCategory")}</button>
        <button class="on" aria-label="属性">${icon("properties")}</button><button aria-label="族类型">${icon("famTypes")}</button></div>`)}
      ${this.panel("绘制", "draw", html`
        <div class="list"><button>${icon("model")}模型</button><button>${icon("reference")}参照</button><button>${icon("plane")}平面</button></div>
        <div class="gallery">
          <div class="cells">${this.gallery.map((g) => html`<button aria-label=${g}>${icon(g)}</button>`)}</div>
          <div class="scroll"><button class="tri flip" aria-label="上一行"></button><button class="tri" aria-label="下一行"></button><button aria-label="更多">${icon("customize")}</button></div>
        </div>
        <div class="faces"><button aria-label="在面上绘制">${icon("drawFace")}</button><button aria-label="在工作平面上绘制">${icon("drawPlane")}</button></div>`)}
      ${this.panel("工作平面", "plane", html`
        <button class="big"><span class="pic">${icon("setPlane")}</span>设置</button>
        <div class="list"><button>${icon("showPlane")}显示</button><button>${icon("viewer")}查看器</button></div>`)}
      ${this.panel("剪贴板", "clip", html`
        <button class="big dim"><span class="pic">${icon("paste")}</span>粘贴<span class="arrow"></span></button>
        <div class="list"><button aria-label="剪切">${icon("cut")}</button><button aria-label="复制">${icon("copy")}</button><button aria-label="匹配类型">${icon("match")}</button></div>`)}
      ${this.panel("几何图形", "geo", html`
        <div class="list"><div><button>${icon("cutGeo")}剪切</button>${drop("剪切")}</div><div><button>${icon("joinGeo")}连接</button>${drop("连接")}</div></div>
        <div class="list"><div><button aria-label="拆分面">${icon("splitFace")}</button></div><div><button aria-label="填色">${icon("paint")}</button>${drop("填色")}</div></div>`)}
      ${this.panel("修改", "mod", html`
        <div class="pair"><button aria-label="对齐">${icon("align")}</button><button aria-label="移动">${icon("move")}</button></div>
        <div class="tools">${this.tools.map((t) => html`<button aria-label=${t}>${icon(t)}</button>`)}</div>`)}
      ${this.panel("测量", "meas", html`<div class="pair">
        <div><button aria-label="测量距离">${icon("measureBig")}</button>${drop("测量")}</div>
        <div><button aria-label="尺寸标注">${icon("dimensionBig")}</button>${drop("尺寸标注")}</div></div>`, "open")}
      ${this.panel("族编辑器", "load", html`
        <button class="big"><span class="pic">${icon("load")}</span>载入到<br>项目</button>
        <button class="big"><span class="pic">${icon("loadClose")}</span>载入到<br>项目并关闭</button>`, "open last")}`;
  }
}

type Prop = { group?: string; name?: string; kind?: "text" | "check"; dim?: boolean; on?: boolean };

@customElement("property-palette")
class PropertyPalette extends LitElement {
  static styles = [base, iconStyles, css`
    :host { display: flex; flex-direction: column; flex: none; width: 287px; font-size: 15px; line-height: 22px; color: #111; }
    .head { display: flex; flex: none; justify-content: space-between; align-items: center; height: 27px; padding: 0 5px 0 3px; background: #bfccdc; margin-bottom: 2px; }
    h2 { margin: 0; font-size: 14px; font-weight: 400; }
    .content { flex: 1; display: flex; flex-direction: column; border-top: 2px solid #6c6872; border-left: 1px solid #bbb; border-right: 1px solid #ddd; margin-right: 1px; background: #fbfbfb; min-height: 0; }
    .preview { display: flex; flex: none; justify-content: space-between; align-items: center; height: 90px; padding: 0 1px 0 4px; background: #f1f1f1; border-bottom: 1px solid #dcd8e0; }
    .thumb { width: 82px; height: 82px; border: 1px solid #e3dde2; display: flex; justify-content: center; align-items: center; background: #f3f3f3; }
    .preview .arrow::before { border-width: 5px 5px 0; border-top-color: #8a8690; }
    .type { display: flex; flex: none; height: 30px; padding: 1px 0; background: #f5f5f5; }
    .pick { position: relative; display: flex; width: 189px; }
    .pick svg { position: absolute; right: 5px; top: 11px; }
    select { appearance: none; flex: 1; border: 1px solid #a9a6ad; border-radius: 0; background: #e1e1e1; font: inherit; padding: 0 4px; color: #111; }
    .edit { gap: 3px; padding: 0 6px; color: #a7a2a9; }
    table { flex: none; width: 100%; border-spacing: 0; table-layout: fixed; }
    .c1 { width: 143px; }
    th, td { height: 24px; padding: 0; font-weight: 400; text-align: left; line-height: 22px; }
    .group { background: #dadada; }
    .group th > div { display: flex; justify-content: space-between; align-items: center; padding: 0 5px 0 2px; height: 24px; }
    .group svg { margin-bottom: 6px; }
    .row th, .row td { border-bottom: 1px dotted #777; border-right: 1px dotted #777; }
    .row th { padding-left: 9px; white-space: nowrap; }
    .row.dim th { color: #8b8b8b; }
    input[type="text"] { display: block; width: 100%; height: 23px; border: 1px solid transparent; background: none; font: inherit; padding: 0 3px; margin: 0; border-radius: 0; }
    .focus input[type="text"] { border-color: #000; }
    input[type="checkbox"] { appearance: none; display: block; width: 16px; height: 16px; margin: 0 0 0 3px; border: 1px solid #333; background: #fbfbfb; }
    input[type="checkbox"]:checked::before { content: ""; display: block; width: 10px; height: 5px; margin: 3px 0 0 2px; border: solid #333; border-width: 0 0 1px 1px; transform: rotate(-45deg); }
    .fill { flex: 1; }
    .foot { display: flex; flex: none; justify-content: space-between; align-items: flex-start; height: 30px; padding: 1px 1px 0 1px; background: #f5f5f5; border-top: 1px solid #dde6e8; }
    a { color: #0a62c4; text-decoration: underline; line-height: 20px; }
    .apply { width: 98px; height: 24px; background: #cccacd; border: 1px solid #bdbabf; color: #8b8b8b; }
    .logo { font-size: 64px; }
  `];
  private rows: Prop[] = [
    { group: "约束" }, { name: "主体", kind: "text", dim: true },
    { group: "标识数据" }, { name: "OmniClass 编号", kind: "text", on: true }, { name: "OmniClass 标题", kind: "text", dim: true },
    { group: "其他" }, { name: "基于工作平面", kind: "check", on: true }, { name: "总是垂直", kind: "check" },
    { name: "加载时剪切的空心", kind: "check" }, { name: "共享", kind: "check" },
  ];
  render() {
    return html`
      <div class="head"><h2>属性</h2><button aria-label="关闭">${icon("closePane")}</button></div>
      <div class="content">
        <div class="preview">
          <div class="thumb"><svg width="60" height="76" viewBox="0 0 60 76"><text class="logo" x="6" y="58" fill="#888">R</text><text class="logo" x="8" y="56" fill="#a6a6a6">R</text></svg></div>
          ${drop("类型选择器")}
        </div>
        <div class="type">
          <div class="pick"><select aria-label="族"><option>族: 体量</option></select>${icon("chevDown")}</div>
          <button class="edit" disabled>${icon("editType")}编辑类型</button>
        </div>
        <table>
          <colgroup><col class="c1"><col></colgroup>
          <tbody>
          ${this.rows.map((r, i) => r.group
            ? html`<tr class="group"><th colspan="2" scope="colgroup"><div>${r.group}${icon("collapse")}</div></th></tr>`
            : html`<tr class="row ${r.dim ? "dim" : ""} ${r.on ? "focus" : ""}">
                <th scope="row"><label for="p${i}">${r.name}</label></th>
                <td>${r.kind === "check" ? html`<input id="p${i}" type="checkbox" ?checked=${r.on}>` : html`<input id="p${i}" type="text" ?disabled=${r.dim}>`}</td></tr>`)}
          </tbody>
        </table>
        <div class="fill"></div>
        <div class="foot"><a href="#help">属性帮助</a><button class="apply" disabled>应用</button></div>
      </div>`;
  }
}

@customElement("model-view")
class ModelView extends LitElement {
  static styles = [base, iconStyles, css`
    :host { flex: 1; display: grid; grid-template: minmax(0, 1fr) 21px / minmax(0, 1fr) 21px; border-top: 2px solid #6c6872; border-left: 2px solid #6c6872; background: #f5f5f5; min-width: 0; }
    .canvas { position: relative; background: #fbfbfb; min-height: 0; }
    .model { width: 100%; height: 100%; }
    .win { position: absolute; right: 5px; top: 8px; display: flex; gap: 6px; }
    .cube { position: absolute; right: 18px; top: 74px; }
    .cube text { font-family: "Noto Sans CJK SC", sans-serif; font-weight: 400; }
    .cube .big { font-size: 24px; }
    .small { font-size: 12px; }
    .nav { position: absolute; right: 1px; top: 177px; width: 35px; display: flex; flex-direction: column; align-items: center; padding: 2px 3px 2px; border: 2px solid #bdbac0; border-radius: 5px; background: #f7f7f7; }
    .nav .end { align-self: flex-end; }
    .nav .arrow { height: 16px; }
    .nav .arrow::before { border-width: 4px 3px 0; border-top-color: #99959d; }
    .nav .wheel { margin-top: 7px; }
    .nav .zoom { margin-top: 5px; }
    .nav hr { width: 100%; margin: 0; border: 0; border-top: 1px solid #c5bcc8; }
    .vbar { display: flex; flex-direction: column; align-items: center; justify-content: space-between; padding: 7px 0 8px; }
    .hbar { display: flex; align-items: center; justify-content: space-between; padding: 0 7px 0 27px; border-top: 1px solid #dcebf2; }
    .thumb { background: #cac8cc; width: 20px; height: 20px; }
    .controls { display: flex; align-items: center; }
    .scale { font: 14px/20px "Liberation Mono", monospace; margin-right: 14px; }
    .controls .ctl { width: 28px; height: 20px; }
    .controls .prev { margin-left: 6px; }
    .track { flex: 1; display: flex; justify-content: center; }
    .corner { display: flex; align-items: center; justify-content: center; }
  `];
  render() {
    return html`
      <div class="canvas">
        <svg class="model" viewBox="0 0 1194 621" role="img" aria-label="三维模型">
          <defs>
            <linearGradient id="side" x1="0" y1="0" x2="0" y2="1"><stop offset="0" stop-color="#363636"/><stop offset="1" stop-color="#3c3c3c"/></linearGradient>
          </defs>
          <g stroke="#333" stroke-width="1" stroke-linejoin="round">
            <path d="M265 72 904 41 970 238 332 270z" fill="#aaaaaa"/>
            <path d="M265 72 332 270V491L265 295z" fill="url(#side)"/>
            <path d="M332 270 970 238V460L332 491z" fill="#727272"/>
          </g>
        </svg>
        <div class="win"><button aria-label="最小化">${icon("winMin")}</button><button aria-label="还原">${icon("winRestore")}</button><button aria-label="关闭视图">${icon("winClose")}</button></div>
        <svg class="cube" width="122" height="90" viewBox="0 0 122 90" role="img" aria-label="ViewCube">
          <defs><radialGradient id="sh"><stop offset="0.4" stop-color="#bbb"/><stop offset="1" stop-color="#fbfbfb"/></radialGradient></defs>
          <ellipse cx="61" cy="57" rx="58" ry="27" fill="#f3f3f3" stroke="#c4c1c6" stroke-dasharray="5 2" stroke-width="1"/>
          <ellipse cx="61" cy="55" rx="45" ry="21" fill="#fbfbfb" stroke="#c4c1c6" stroke-dasharray="5 2" stroke-width="1"/>
          <ellipse cx="62" cy="55" rx="31" ry="13" fill="url(#sh)" stroke="none"/>
          <path d="M38 7 79 5 86 19 41 21z" fill="#f3f3f3" stroke="#aaa" stroke-width="1"/>
          <path d="M38 7 41 21V61L39 50z" fill="#ccc" stroke="#aaa" stroke-width="1"/>
          <path d="M41 21 86 19V59L41 61z" fill="#e8e8e8" stroke="#999" stroke-width="1"/>
          <text class="big" x="51" y="49" fill="#999">后</text>
          <text class="small" x="55" y="17" fill="#aaa">上</text>
          <text class="small" x="2" y="59" fill="#999">东</text>
          <text class="small" x="60" y="84" fill="#999">北</text>
          <text class="small" x="105" y="53" fill="#999">西</text>
        </svg>
        <div class="nav">
          <button class="end" aria-label="关闭导航栏">${icon("navClose")}</button>
          <button class="wheel" aria-label="控制盘">${icon("wheel")}</button>${drop("控制盘")}
          <hr>
          <button class="zoom" aria-label="区域放大">${icon("zoomRegion")}</button>${drop("缩放")}
          <button class="end" aria-label="导航栏选项">${icon("navMenu")}</button>
        </div>
      </div>
      <div class="vbar"><button aria-label="向上滚动">${icon("up")}</button><div class="thumb"></div><button aria-label="向下滚动">${icon("down")}</button></div>
      <div class="hbar">
        <div class="controls">
          <span class="scale">1 : 100</span>
          ${["detail", "style", "cropOff", "cropShow", "lock3d", "glasses", "constraints", "analysis"].map((n) => html`<button class="ctl" aria-label=${n}>${icon(n)}</button>`)}
          <button class="prev" aria-label="向左滚动">${icon("left")}</button>
        </div>
        <div class="track"><div class="thumb"></div></div>
        <button aria-label="向右滚动">${icon("right")}</button>
      </div>
      <div class="corner">${icon("grip")}</div>`;
  }
}

type Node = { cells: string; text: string; icon?: string; selected?: boolean; level: number };

@customElement("project-browser")
class ProjectBrowser extends LitElement {
  @property({ type: String }) heading = "项目浏览器 - 族1";
  static styles = [base, iconStyles, css`
    :host { display: flex; flex-direction: column; flex: none; width: 207px; font-size: 15px; line-height: 22px; color: #111; }
    .head { display: flex; flex: none; justify-content: space-between; align-items: center; height: 27px; padding: 0 0 0 4px; background: #bfccdc; margin-bottom: 2px; overflow: hidden; }
    h2 { margin: 0; font-size: 14px; font-weight: 400; white-space: nowrap; }
    .tree { flex: 1; margin: 0; padding: 1px 0 0; list-style: none; border-top: 2px solid #6c6872; border-left: 2px solid #6c6872; background: #fbfbfb; }
    li { display: flex; align-items: center; height: 22px; white-space: nowrap; }
    .pic { width: 26px; }
    .text { padding: 0 3px; margin-left: 3px; }
    .root { margin-left: 0; padding: 0; }
    .selected { background: #e6e4e4; }
  `];
  /** Cell codes: v line, t tee, l elbow, - open box, + closed box, e last open box, f first box, p last closed box, . blank. */
  private nodes: Node[] = [
    { cells: "f", text: "视图 (全部)", icon: "views", level: 0 },
    { cells: "v-", text: "楼层平面", level: 1 },
    { cells: "vvl", text: "标高 1", level: 2, selected: true },
    { cells: "v+", text: "三维视图", level: 1 },
    { cells: "ve", text: "立面 (立面 1)", level: 1 },
    { cells: "v.t", text: "东", level: 2 },
    { cells: "v.t", text: "北", level: 2 },
    { cells: "v.t", text: "南", level: 2 },
    { cells: "v.l", text: "西", level: 2 },
    { cells: "t", text: "图纸 (全部)", icon: "sheets", level: 0 },
    { cells: "p", text: "族", icon: "families", level: 0 },
  ];
  private cell(c: string) {
    const box = "-+efp".includes(c);
    const top = "vtl-+ep".includes(c);
    const below = "vt-+f".includes(c);
    return html`<svg width="26" height="22" viewBox="0 0 26 22">
      <g stroke="#999" stroke-width="1" stroke-dasharray="1 1">
        ${top ? svg`<path d="M10.500 0v11"/>` : nothing}${below ? svg`<path d="M10.500 11v11"/>` : nothing}
        ${box || c === "t" || c === "l" ? svg`<path d="M11 11.500h15"/>` : nothing}
      </g>
      ${box ? svg`<rect x="4.500" y="5.500" width="12" height="12" fill="#f3f3f3" stroke="#8c8c8c" stroke-width="1"/>
        <path d="M6.500 11.500h8" stroke="#2a4a8c" stroke-width="1"/>` : nothing}
      ${c === "+" || c === "p" ? svg`<path d="M10.500 7.500v8" stroke="#2a4a8c" stroke-width="1"/>` : nothing}
    </svg>`;
  }
  render() {
    return html`
      <div class="head"><h2>${this.heading}</h2><button aria-label="关闭">${icon("closePane")}</button></div>
      <ul class="tree" role="tree">
        ${this.nodes.map((n) => html`<li role="treeitem" aria-level=${n.level + 1} aria-selected=${n.selected ? "true" : "false"}>
          ${[...n.cells].map((c) => this.cell(c))}${n.icon ? html`<span class="pic">${icon(n.icon)}</span>` : nothing}
          <span class="text ${n.level === 0 ? "root" : ""} ${n.selected ? "selected" : ""}">${n.text}</span></li>`)}
      </ul>`;
  }
}

@customElement("app-root")
class AppRoot extends LitElement {
  static styles = css`
    :host { display: flex; flex-direction: column; height: 100vh; box-sizing: border-box; overflow: hidden; border: 1px solid #000; border-bottom: 2px solid #a9a6ad; background: #f5f5f5; font-family: "Open Sans", "Noto Sans CJK SC", sans-serif; }
    main { flex: 1; display: flex; min-height: 0; }
    model-view { margin: 0 6px 0 4px; }
  `;
  render() {
    return html`<title-bar></title-bar><ribbon-tabs></ribbon-tabs><ribbon-bar></ribbon-bar>
      <main><property-palette></property-palette><model-view></model-view><project-browser></project-browser></main>`;
  }
}
